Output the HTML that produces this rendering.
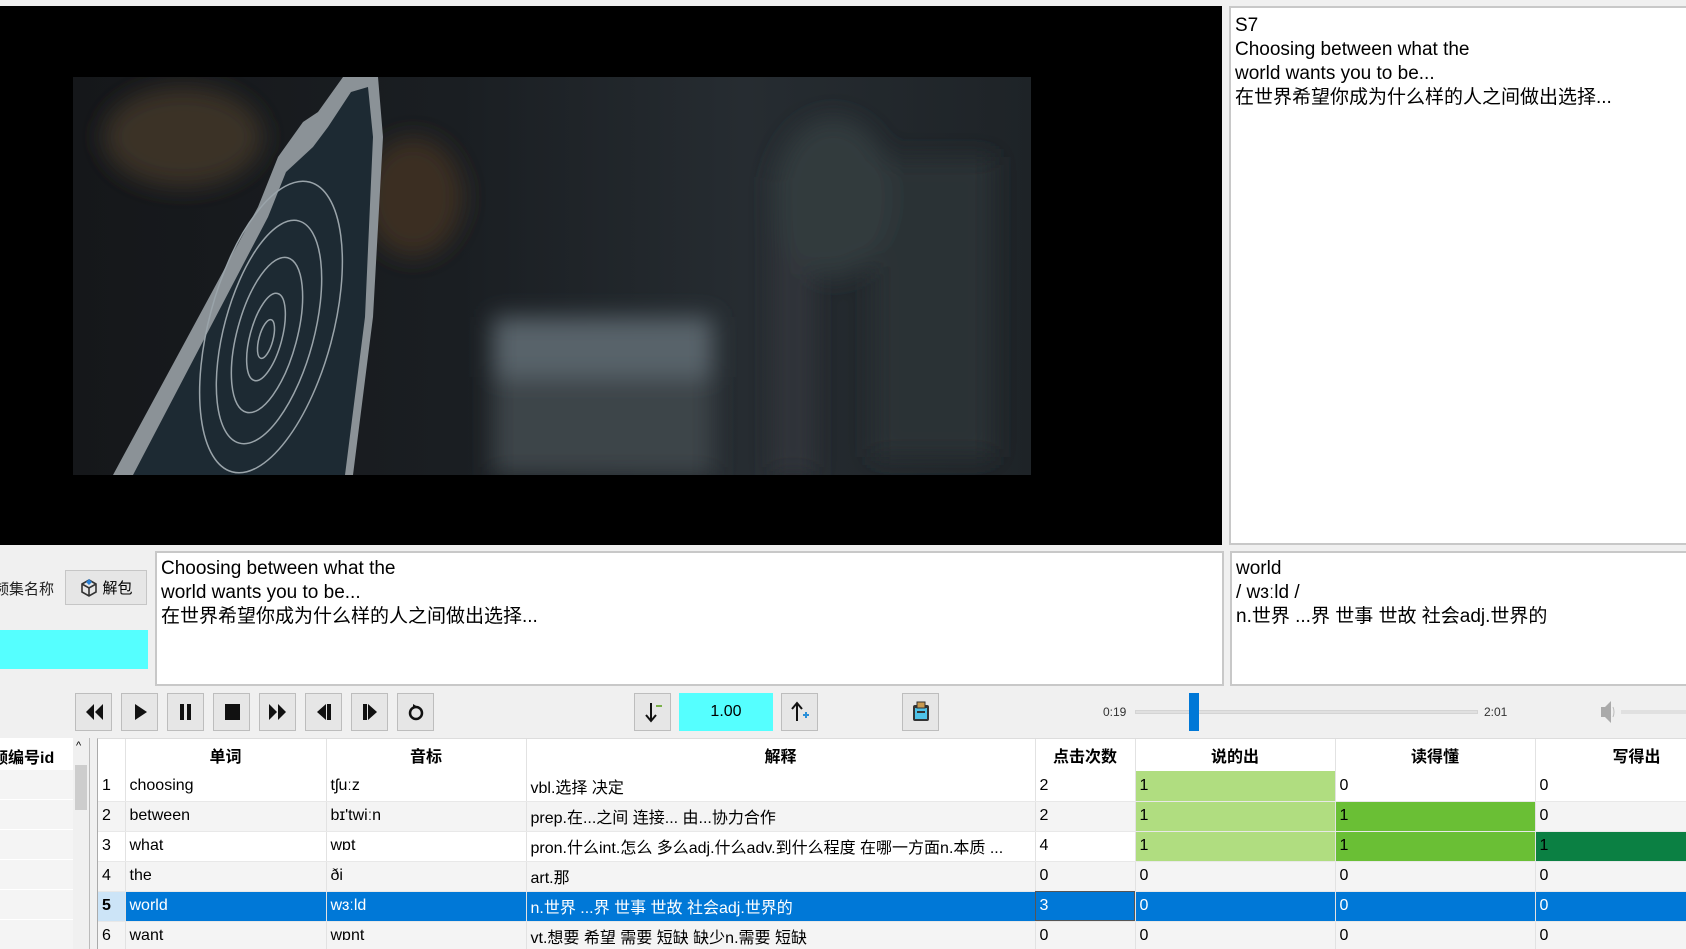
<!DOCTYPE html>
<html><head><meta charset="utf-8"><style>
*{margin:0;padding:0;box-sizing:border-box}
body{width:1686px;height:949px;overflow:hidden;background:#f0f0f0;font-family:"Liberation Sans","Noto Sans CJK SC",sans-serif;color:#000;position:relative}
.a{position:absolute}
.box{position:absolute;background:#fff;border:2px solid #c8c8c8;font-size:19px;line-height:24px;padding:4px 4px}
.btn{position:absolute;top:693px;width:37px;height:38px;background:#e6e6e6;border:1px solid #bdbdbd;display:flex;align-items:center;justify-content:center}
table{border-collapse:collapse;font-size:16px}
td{height:30px;padding:0 4px;border-right:1px solid #e2e2e2;border-bottom:1px solid #e8e8e8;white-space:nowrap;overflow:hidden;vertical-align:middle}
th{height:32px;font-weight:bold;font-size:16px;border-right:1px solid #e2e2e2;background:#fff}
tr.alt td{background:#f4f4f4}
tr.sel td{background:#0078d7;color:#fff}
.lg{background:#b0dd80!important}.mg{background:#6abf35!important}.dg{background:#0b8043!important}
</style></head><body>
<div class="a" style="left:0;top:6px;width:1222px;height:539px;background:#000"></div>
<svg class="a" style="left:73px;top:77px" width="958" height="398" viewBox="0 0 958 398">
<defs>
<linearGradient id="bg" x1="0" x2="1"><stop offset="0" stop-color="#15171a"/><stop offset=".4" stop-color="#1a1e22"/><stop offset=".7" stop-color="#262c31"/><stop offset="1" stop-color="#1e2327"/></linearGradient>
<filter id="bl"><feGaussianBlur stdDeviation="12"/></filter>
</defs>
<rect width="958" height="398" fill="url(#bg)"/>
<g filter="url(#bl)">
<rect x="420" y="260" width="220" height="138" fill="#3d4549"/>
<rect x="420" y="240" width="220" height="60" fill="#59646a"/>
<rect x="700" y="100" width="40" height="298" fill="#30363a"/>
<rect x="800" y="80" width="120" height="300" fill="#2b3135"/>
<ellipse cx="760" cy="120" rx="60" ry="80" fill="#333a3e"/>
<ellipse cx="110" cy="60" rx="80" ry="50" fill="#3a3025"/>
<ellipse cx="340" cy="120" rx="50" ry="60" fill="#3a2e22"/>
</g>
<path d="M40 398 L185 130 L205 80 L230 45 L245 35 L270 0 L305 0 L310 60 L300 240 L280 398 Z" fill="#8b9297"/>
<path d="M60 398 L195 140 L213 95 L240 70 L255 50 L278 15 L295 10 L300 60 L292 240 L272 398 Z" fill="#1d2a33"/>
<g fill="none" stroke="#9aa4aa" stroke-width="1.5">
<ellipse cx="198" cy="250" rx="62" ry="150" transform="rotate(15 198 250)"/>
<ellipse cx="196" cy="255" rx="45" ry="115" transform="rotate(15 196 255)"/>
<ellipse cx="194" cy="258" rx="30" ry="80" transform="rotate(15 194 258)"/>
<ellipse cx="193" cy="260" rx="16" ry="45" transform="rotate(15 193 260)"/>
<ellipse cx="193" cy="262" rx="7" ry="20" transform="rotate(15 193 262)"/>
</g>
</svg>
<div class="box" style="left:1229px;top:6px;width:460px;height:539px;padding:6px 4px">S7<br>Choosing between what the<br>world wants you to be...<br>在世界希望你成为什么样的人之间做出选择...</div>

<div class="a" style="left:-6px;top:578px;font-size:15px;color:#222">频集名称</div>
<div class="a" style="left:65px;top:570px;width:82px;height:35px;background:#e6e6e6;border:1px solid #c6c6c6;font-size:15px;display:flex;align-items:center;justify-content:center;gap:3px"><svg width="20" height="20" viewBox="0 0 20 20"><path d="M10 2 L17 6 L17 14 L10 18 L3 14 L3 6 Z M3 6 L10 10 L17 6 M10 10 L10 18" fill="none" stroke="#333" stroke-width="1.6"/><path d="M10 1 L13 4 L10 7 L7 4Z" fill="#2a7fd4"/></svg>解包</div>
<div class="a" style="left:0;top:630px;width:148px;height:39px;background:#55ffff"></div>
<div class="box" style="left:155px;top:551px;width:1069px;height:135px">Choosing between what the<br>world wants you to be...<br>在世界希望你成为什么样的人之间做出选择...</div>
<div class="box" style="left:1230px;top:551px;width:460px;height:135px">world<br>/ wɜːld /<br>n.世界 ...界 世事 世故 社会adj.世界的</div>

<div class="btn" style="left:75px"><svg width="22" height="20"><path d="M11 2 L3 10 L11 18Z M20 2 L12 10 L20 18Z" fill="#111"/></svg></div>
<div class="btn" style="left:121px"><svg width="20" height="20"><path d="M5 2 L17 10 L5 18Z" fill="#111"/></svg></div>
<div class="btn" style="left:167px"><svg width="20" height="20"><rect x="4" y="2" width="4" height="16" fill="#111"/><rect x="11" y="2" width="4" height="16" fill="#111"/></svg></div>
<div class="btn" style="left:213px"><svg width="20" height="20"><rect x="3" y="2" width="15" height="16" fill="#111"/></svg></div>
<div class="btn" style="left:259px"><svg width="22" height="20"><path d="M2 2 L10 10 L2 18Z M11 2 L19 10 L11 18Z" fill="#111"/></svg></div>
<div class="btn" style="left:305px"><svg width="22" height="20"><path d="M13 2 L4 10 L13 18Z" fill="#111"/><rect x="14" y="2" width="4" height="16" fill="#111"/></svg></div>
<div class="btn" style="left:351px"><svg width="22" height="20"><rect x="4" y="2" width="4" height="16" fill="#111"/><path d="M9 2 L18 10 L9 18Z" fill="#111"/></svg></div>
<div class="btn" style="left:397px"><svg width="20" height="20"><circle cx="10" cy="11" r="6" fill="none" stroke="#111" stroke-width="2.5"/><path d="M7 2 L12 5 L7 7Z" fill="#111"/></svg></div>

<div class="btn" style="left:634px"><svg width="22" height="24"><path d="M9 3 V20 M4 15 L9 21 L14 15" fill="none" stroke="#111" stroke-width="2"/><rect x="14" y="5" width="6" height="2" fill="#7bb04a"/></svg></div>
<div class="a" style="left:679px;top:693px;width:94px;height:38px;background:#55ffff;font-size:16px;display:flex;align-items:center;justify-content:center">1.00</div>
<div class="btn" style="left:781px"><svg width="22" height="24"><path d="M8 21 V4 M3 9 L8 3 L13 9" fill="none" stroke="#111" stroke-width="2"/><path d="M14 15 H20 M17 12 V18" stroke="#2a8fd8" stroke-width="2"/></svg></div>
<div class="btn" style="left:902px"><svg width="22" height="24"><rect x="3" y="5" width="16" height="16" rx="2" fill="#333"/><rect x="5" y="8" width="12" height="11" fill="#4fc3e8"/><rect x="7" y="2" width="8" height="6" fill="#c89a50" stroke="#333"/><rect x="7" y="11" width="8" height="2" fill="#333"/></svg></div>
<div class="a" style="left:1103px;top:705px;font-size:12px;color:#333">0:19</div>
<div class="a" style="left:1135px;top:710px;width:343px;height:4px;background:#e0e0e0;border:1px solid #d4d4d4"></div>
<div class="a" style="left:1189px;top:693px;width:10px;height:38px;background:#0078d7"></div>
<div class="a" style="left:1484px;top:705px;font-size:12px;color:#333">2:01</div>
<svg class="a" style="left:1598px;top:697px" width="18" height="30"><path d="M3 10 H7 L13 4 V26 L7 20 H3Z" fill="#aaa"/><path d="M15 10 Q17 15 15 20" stroke="#bbb" fill="none"/></svg>
<div class="a" style="left:1621px;top:710px;width:65px;height:4px;background:#e0e0e0"></div>

<div class="a" style="left:0;top:738px;width:90px;height:211px;background:#fff;border-right:1px solid #bbb"></div>
<div class="a" style="left:-8px;top:744px;font-size:16px;font-weight:bold">频编号id</div>
<div class="a" style="left:0;top:770px;width:73px;height:179px;background:repeating-linear-gradient(#f4f4f4 0 29px,#fff 29px 30px)"></div>
<div class="a" style="left:73px;top:738px;width:16px;height:211px;background:#f0f0f0"></div>
<div class="a" style="left:75px;top:765px;width:12px;height:45px;background:#cdcdcd"></div>
<div class="a" style="left:76px;top:740px;font-size:11px">^</div>

<div class="a" style="left:97px;top:738px;width:1589px;height:211px;background:#fff;border-left:1px solid #aaa;border-top:1px solid #ddd;overflow:hidden">
<table style="width:1640px;table-layout:fixed">
<colgroup><col style="width:27px"><col style="width:201px"><col style="width:200px"><col style="width:509px"><col style="width:100px"><col style="width:200px"><col style="width:200px"><col style="width:203px"></colgroup>
<tr><th></th><th>单词</th><th>音标</th><th>解释</th><th>点击次数</th><th>说的出</th><th>读得懂</th><th>写得出</th></tr>
<tr><td>1</td><td>choosing</td><td>tʃuːz</td><td>vbl.选择 决定</td><td>2</td><td class="lg">1</td><td>0</td><td>0</td></tr>
<tr class="alt"><td>2</td><td>between</td><td>bɪ'twiːn</td><td> prep.在...之间 连接... 由...协力合作</td><td>2</td><td class="lg">1</td><td class="mg">1</td><td>0</td></tr>
<tr><td>3</td><td>what</td><td>wɒt</td><td> pron.什么int.怎么 多么adj.什么adv.到什么程度 在哪一方面n.本质 ...</td><td>4</td><td class="lg">1</td><td class="mg">1</td><td class="dg">1</td></tr>
<tr class="alt"><td>4</td><td>the</td><td>ði</td><td> art.那</td><td>0</td><td>0</td><td>0</td><td>0</td></tr>
<tr class="sel"><td style="background:#cce4f7;color:#000;font-weight:bold">5</td><td>world</td><td>wɜːld</td><td>n.世界 ...界 世事 世故 社会adj.世界的</td><td style="outline:1px solid #555;outline-offset:-1px">3</td><td>0</td><td>0</td><td>0</td></tr>
<tr class="alt"><td>6</td><td>want</td><td>wɒnt</td><td>vt.想要 希望 需要 短缺 缺少n.需要 短缺</td><td>0</td><td>0</td><td>0</td><td>0</td></tr>
</table></div>
</body></html>
